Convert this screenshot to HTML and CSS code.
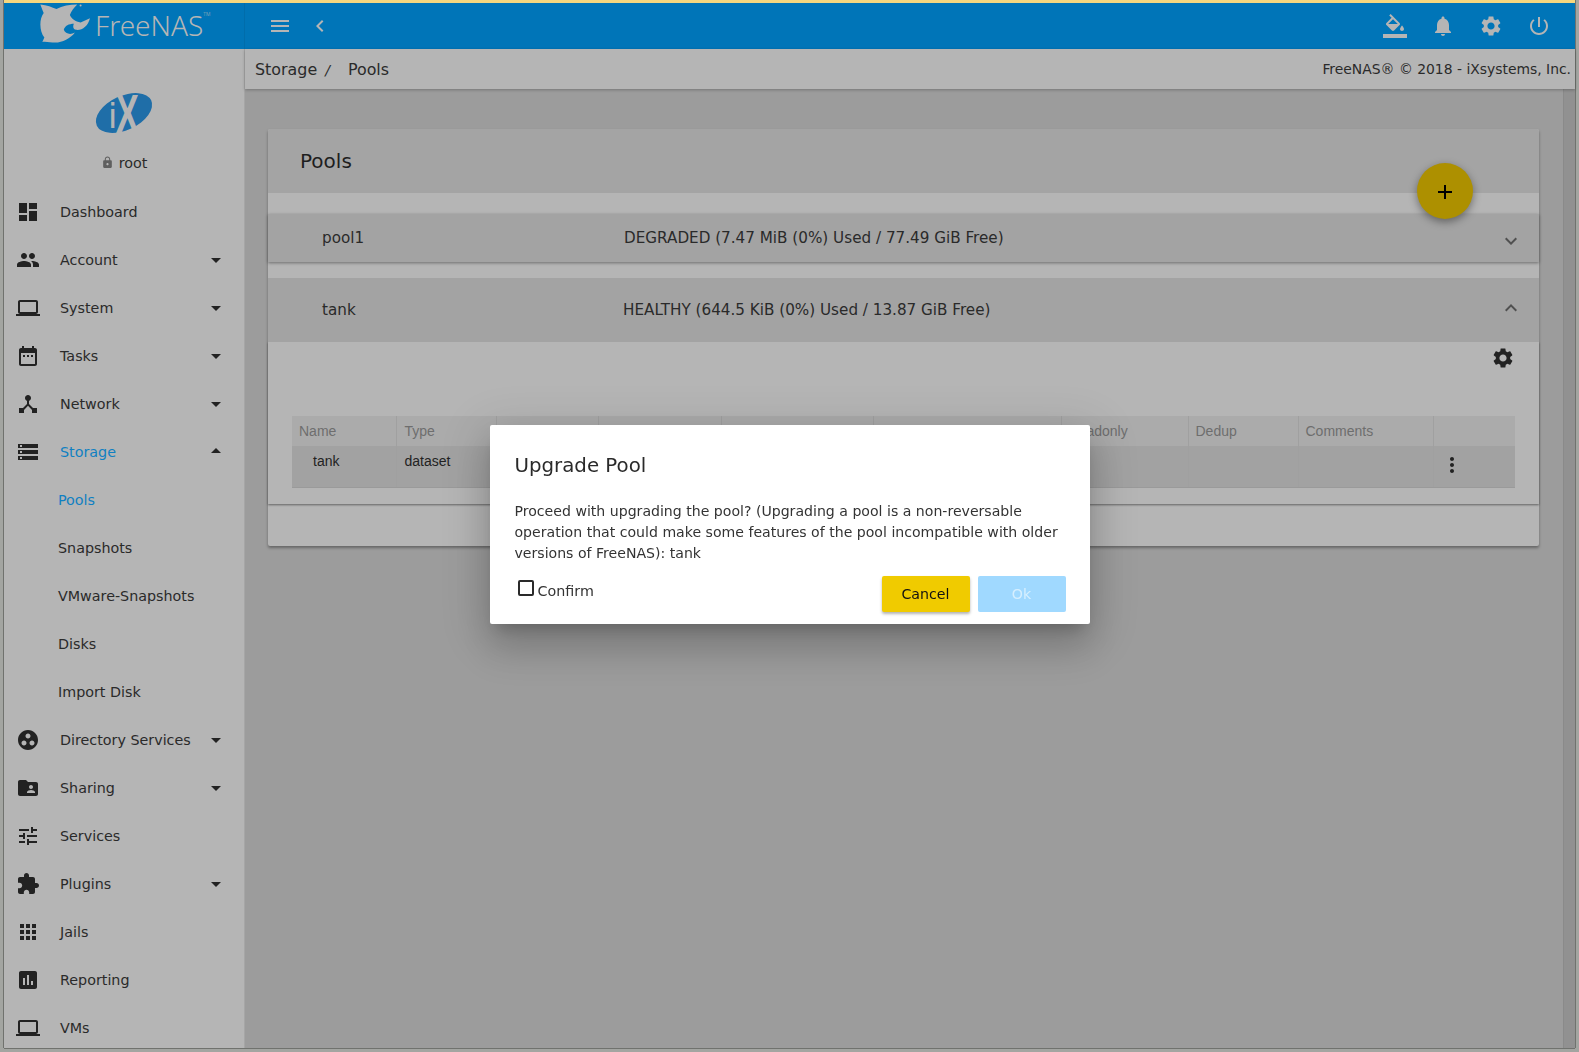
FILE: index.html
```html
<!DOCTYPE html>
<html lang="en">
<head>
    <meta charset="UTF-8">
    <title>FreeNAS - Pools</title>
    <link rel="stylesheet" href="styles.css">
</head>
<body>
    <div class="window">
        <header class="topbar">
            <div class="brand">
                <svg class="shark" viewBox="26 10 158 122">
                    <path fill="#b5b5b5" d="M30 14C50 16 65 22 78 28C95 18 118 14 140 14C130 24 122 34 118 46C122 56 135 66 150 68L178 55C172 78 155 92 137 90C128 88 126 80 130 72C115 72 103 78 100 90C104 102 120 106 133 98C120 116 95 128 75 128C60 128 48 124 36 126L42 113C28 95 25 60 40 40C36 30 33 22 30 14Z"/>
                    <circle cx="150" cy="17" r="3" fill="#b5b5b5"/>
                </svg>
                <span class="brand-name">FreeNAS<sup class="tm">TM</sup></span>
            </div>
            <div class="bar-tools">
                <svg class="bar-icon" viewBox="0 0 24 24"><path d="M3 18h18v-2H3v2zm0-5h18v-2H3v2zm0-7v2h18V6H3z"/></svg>
                <svg class="bar-icon" viewBox="0 0 24 24"><path d="M15.41 7.41L14 6l-6 6 6 6 1.41-1.41L10.83 12z"/></svg>
            </div>
            <div class="bar-actions">
                <svg class="bar-icon" viewBox="0 0 24 24"><path d="M16.56 8.94L7.62 0 6.21 1.41l2.38 2.38-5.15 5.15c-.59.59-.59 1.54 0 2.12l5.5 5.5c.29.29.68.44 1.06.44s.77-.15 1.06-.44l5.5-5.5c.59-.58.59-1.53 0-2.12zM5.21 10L10 5.21 14.79 10H5.21zM19 11.5s-2 2.17-2 3.5c0 1.1.9 2 2 2s2-.9 2-2c0-1.33-2-3.5-2-3.5zM0 20h24v4H0z"/></svg>
                <svg class="bar-icon" viewBox="0 0 24 24"><path d="M12 22c1.1 0 2-.9 2-2h-4c0 1.1.89 2 2 2zm6-6v-5c0-3.07-1.64-5.64-4.5-6.32V4c0-.83-.67-1.5-1.5-1.5s-1.5.67-1.5 1.5v.68C7.63 5.36 6 7.92 6 11v5l-2 2v1h16v-1l-2-2z"/></svg>
                <svg class="bar-icon" viewBox="0 0 24 24"><path d="M19.14 12.94c.04-.3.06-.61.06-.94 0-.32-.02-.64-.07-.94l2.03-1.58c.18-.14.23-.41.12-.61l-1.92-3.32c-.12-.22-.37-.29-.59-.22l-2.39.96c-.5-.38-1.03-.7-1.62-.94l-.36-2.54c-.04-.24-.24-.41-.48-.41h-3.84c-.24 0-.43.17-.47.41l-.36 2.54c-.59.24-1.13.57-1.62.94l-2.39-.96c-.22-.08-.47 0-.59.22L2.74 8.87c-.12.21-.08.47.12.61l2.03 1.58c-.05.3-.09.63-.09.94s.02.64.07.94l-2.03 1.58c-.18.14-.23.41-.12.61l1.92 3.32c.12.22.37.29.59.22l2.39-.96c.5.38 1.03.7 1.62.94l.36 2.54c.05.24.24.41.48.41h3.84c.24 0 .44-.17.47-.41l.36-2.54c.59-.24 1.13-.56 1.62-.94l2.39.96c.22.08.47 0 .59-.22l1.92-3.32c.12-.22.07-.47-.12-.61l-2.01-1.58zM12 15.6c-1.98 0-3.6-1.62-3.6-3.6s1.62-3.6 3.6-3.6 3.6 1.62 3.6 3.6-1.62 3.6-3.6 3.6z"/></svg>
                <svg class="bar-icon" viewBox="0 0 24 24"><path d="M13 3h-2v10h2V3zm4.83 2.17l-1.42 1.42C17.99 7.86 19 9.81 19 12c0 3.87-3.13 7-7 7s-7-3.13-7-7c0-2.19 1.01-4.14 2.58-5.42L6.17 5.17C4.23 6.82 3 9.26 3 12c0 4.97 4.03 9 9 9s9-4.03 9-9c0-2.74-1.23-5.18-3.17-6.83z"/></svg>
            </div>
        </header>

        <div class="shell">
            <nav class="sidebar">
                <div class="user-box">
                    <svg class="ix-logo" viewBox="0 0 80 55">
                        <ellipse cx="39" cy="28" rx="30" ry="17" transform="rotate(-25 39 28)" fill="#1f6ea8"/>
                        <text class="ix-text" transform="translate(24.4 48) scale(.63 1)"><tspan class="ix-small" dy="-5">i</tspan><tspan dy="5">X</tspan></text>
                    </svg>
                    <div class="user-name">
                        <svg class="lock" viewBox="0 0 24 24"><path d="M18 8h-1V6c0-2.76-2.24-5-5-5S7 3.24 7 6v2H6c-1.1 0-2 .9-2 2v10c0 1.1.9 2 2 2h12c1.1 0 2-.9 2-2V10c0-1.1-.9-2-2-2zm-6 9c-1.1 0-2-.9-2-2s.9-2 2-2 2 .9 2 2-.9 2-2 2zm3.1-9H8.9V6c0-1.71 1.39-3.1 3.1-3.1 1.71 0 3.1 1.39 3.1 3.1v2z"/></svg>
                        root
                    </div>
                </div>
                <a class="nav-item"><svg class="nav-icon" viewBox="0 0 24 24"><path d="M3 13h8V3H3v10zm0 8h8v-6H3v6zm10 0h8V11h-8v10zm0-18v6h8V3h-8z"/></svg>Dashboard</a>
                <a class="nav-item has-caret"><svg class="nav-icon" viewBox="0 0 24 24"><path d="M16 11c1.66 0 2.99-1.34 2.99-3S17.66 5 16 5c-1.66 0-3 1.34-3 3s1.34 3 3 3zm-8 0c1.66 0 2.99-1.34 2.99-3S9.66 5 8 5C6.34 5 5 6.34 5 8s1.34 3 3 3zm0 2c-2.33 0-7 1.17-7 3.5V19h14v-2.5c0-2.33-4.67-3.5-7-3.5zm8 0c-.29 0-.62.02-.97.05 1.16.84 1.97 1.97 1.97 3.45V19h6v-2.5c0-2.33-4.67-3.5-7-3.5z"/></svg>Account</a>
                <a class="nav-item has-caret"><svg class="nav-icon" viewBox="0 0 24 24"><path d="M20 18c1.1 0 1.99-.9 1.99-2L22 6c0-1.1-.9-2-2-2H4c-1.1 0-2 .9-2 2v10c0 1.1.9 2 2 2H0v2h24v-2h-4zM4 6h16v10H4V6z"/></svg>System</a>
                <a class="nav-item has-caret"><svg class="nav-icon" viewBox="0 0 24 24"><path d="M9 11H7v2h2v-2zm4 0h-2v2h2v-2zm4 0h-2v2h2v-2zm2-7h-1V2h-2v2H8V2H6v2H5c-1.11 0-1.99.9-1.99 2L3 20c0 1.1.89 2 2 2h14c1.1 0 2-.9 2-2V6c0-1.1-.9-2-2-2zm0 16H5V9h14v11z"/></svg>Tasks</a>
                <a class="nav-item has-caret"><svg class="nav-icon" viewBox="0 0 24 24"><path d="M17 16l-4-4V8.82C14.16 8.4 15 7.3 15 6c0-1.66-1.34-3-3-3S9 4.34 9 6c0 1.3.84 2.4 2 2.82V12l-4 4H3v5h5v-3.05l4-4.2 4 4.2V21h5v-5h-4z"/></svg>Network</a>
                <a class="nav-item has-caret open active"><svg class="nav-icon" viewBox="0 0 24 24"><path d="M2 20h20v-4H2v4zm2-3h2v2H4v-2zM2 4v4h20V4H2zm4 3H4V5h2v2zm-4 7h20v-4H2v4zm2-3h2v2H4v-2z"/></svg>Storage</a>
                <a class="nav-sub active">Pools</a>
                <a class="nav-sub">Snapshots</a>
                <a class="nav-sub">VMware-Snapshots</a>
                <a class="nav-sub">Disks</a>
                <a class="nav-sub">Import Disk</a>
                <a class="nav-item has-caret"><svg class="nav-icon" viewBox="0 0 24 24"><path d="M12 2C6.48 2 2 6.48 2 12s4.48 10 10 10 10-4.48 10-10S17.52 2 12 2zM8 17.5c-1.38 0-2.5-1.12-2.5-2.5s1.12-2.5 2.5-2.5 2.5 1.12 2.5 2.5-1.12 2.5-2.5 2.5zM9.5 8c0-1.38 1.12-2.5 2.5-2.5s2.5 1.12 2.5 2.5-1.12 2.5-2.5 2.5S9.5 9.38 9.5 8zm6.5 9.5c-1.38 0-2.5-1.12-2.5-2.5s1.12-2.5 2.5-2.5 2.5 1.12 2.5 2.5-1.12 2.5-2.5 2.5z"/></svg>Directory Services</a>
                <a class="nav-item has-caret"><svg class="nav-icon" viewBox="0 0 24 24"><path d="M20 6h-8l-2-2H4c-1.1 0-1.99.9-1.99 2L2 18c0 1.1.9 2 2 2h16c1.1 0 2-.9 2-2V8c0-1.1-.9-2-2-2zm-5 3c1.1 0 2 .9 2 2s-.9 2-2 2-2-.9-2-2 .9-2 2-2zm4 8h-8v-1c0-1.33 2.67-2 4-2s4 .67 4 2v1z"/></svg>Sharing</a>
                <a class="nav-item"><svg class="nav-icon" viewBox="0 0 24 24"><path d="M3 17v2h6v-2H3zM3 5v2h10V5H3zm10 16v-2h8v-2h-8v-2h-2v6h2zM7 9v2H3v2h4v2h2V9H7zm14 4v-2H11v2h10zm-6-4h2V7h4V5h-4V3h-2v6z"/></svg>Services</a>
                <a class="nav-item has-caret"><svg class="nav-icon" viewBox="0 0 24 24"><path d="M20.5 11H19V7c0-1.1-.9-2-2-2h-4V3.5C13 2.12 11.88 1 10.5 1S8 2.12 8 3.5V5H4c-1.1 0-1.99.9-1.99 2v3.8H3.5c1.49 0 2.7 1.21 2.7 2.7s-1.21 2.7-2.7 2.7H2V20c0 1.1.9 2 2 2h3.8v-1.5c0-1.49 1.21-2.7 2.7-2.7 1.49 0 2.7 1.21 2.7 2.7V22H17c1.1 0 2-.9 2-2v-4h1.5c1.38 0 2.5-1.12 2.5-2.5S21.88 11 20.5 11z"/></svg>Plugins</a>
                <a class="nav-item"><svg class="nav-icon" viewBox="0 0 24 24"><path d="M4 8h4V4H4v4zm6 12h4v-4h-4v4zm-6 0h4v-4H4v4zm0-6h4v-4H4v4zm6 0h4v-4h-4v4zm6-10v4h4V4h-4zm-6 4h4V4h-4v4zm6 6h4v-4h-4v4zm0 6h4v-4h-4v4z"/></svg>Jails</a>
                <a class="nav-item"><svg class="nav-icon" viewBox="0 0 24 24"><path d="M19 3H5c-1.1 0-2 .9-2 2v14c0 1.1.9 2 2 2h14c1.1 0 2-.9 2-2V5c0-1.1-.9-2-2-2zM9 17H7v-7h2v7zm4 0h-2V7h2v10zm4 0h-2v-4h2v4z"/></svg>Reporting</a>
                <a class="nav-item"><svg class="nav-icon" viewBox="0 0 24 24"><path d="M20 18c1.1 0 1.99-.9 1.99-2L22 6c0-1.1-.9-2-2-2H4c-1.1 0-2 .9-2 2v10c0 1.1.9 2 2 2H0v2h24v-2h-4zM4 6h16v10H4V6z"/></svg>VMs</a>
            </nav>

            <div class="main">
                <div class="crumbs">
                    <div class="crumb-path"><span>Storage</span><i class="crumb-sep">/</i><span>Pools</span></div>
                    <div class="copyright">FreeNAS® © 2018 - iXsystems, Inc.</div>
                </div>
                <div class="main-body">
                    <div class="content">
                        <section class="card">
                            <h2 class="card-title">Pools</h2>
                            <button class="fab"><svg viewBox="0 0 24 24"><path d="M19 13h-6v6h-2v-6H5v-2h6V5h2v6h6v2z"/></svg></button>

                            <div class="pool-row pool-closed">
                                <span class="pool-name">pool1</span>
                                <span class="pool-status">DEGRADED (7.47 MiB (0%) Used / 77.49 GiB Free)</span>
                                <svg class="chevron" viewBox="0 0 24 24"><path d="M16.59 8.59L12 13.17 7.41 8.59 6 10l6 6 6-6z"/></svg>
                            </div>

                            <div class="pool-row pool-open">
                                <span class="pool-name">tank</span>
                                <span class="pool-status">HEALTHY (644.5 KiB (0%) Used / 13.87 GiB Free)</span>
                                <svg class="chevron" viewBox="0 0 24 24"><path d="M12 8l-6 6 1.41 1.41L12 10.83l4.59 4.58L18 14z"/></svg>
                            </div>

                            <div class="pool-panel">
                                <div class="panel-tools">
                                    <svg class="panel-gear" viewBox="0 0 24 24"><path d="M19.14 12.94c.04-.3.06-.61.06-.94 0-.32-.02-.64-.07-.94l2.03-1.58c.18-.14.23-.41.12-.61l-1.92-3.32c-.12-.22-.37-.29-.59-.22l-2.39.96c-.5-.38-1.03-.7-1.62-.94l-.36-2.54c-.04-.24-.24-.41-.48-.41h-3.84c-.24 0-.43.17-.47.41l-.36 2.54c-.59.24-1.13.57-1.62.94l-2.39-.96c-.22-.08-.47 0-.59.22L2.74 8.87c-.12.21-.08.47.12.61l2.03 1.58c-.05.3-.09.63-.09.94s.02.64.07.94l-2.03 1.58c-.18.14-.23.41-.12.61l1.92 3.32c.12.22.37.29.59.22l2.39-.96c.5.38 1.03.7 1.62.94l.36 2.54c.05.24.24.41.48.41h3.84c.24 0 .44-.17.47-.41l.36-2.54c.59-.24 1.13-.56 1.62-.94l2.39.96c.22.08.47 0 .59-.22l1.92-3.32c.12-.22.07-.47-.12-.61l-2.01-1.58zM12 15.6c-1.98 0-3.6-1.62-3.6-3.6s1.62-3.6 3.6-3.6 3.6 1.62 3.6 3.6-1.62 3.6-3.6 3.6z"/></svg>
                                </div>
                                <table class="dataset-table">
                                    <colgroup>
                                        <col class="col-name"><col class="col-type"><col class="col-used"><col class="col-avail"><col class="col-comp"><col class="col-ratio"><col class="col-read"><col class="col-dedup"><col class="col-comm"><col>
                                    </colgroup>
                                    <thead>
                                        <tr>
                                            <th>Name</th><th class="th-type">Type</th><th>Used</th><th>Available</th><th>Compression</th><th>Compression Ratio</th><th>Readonly</th><th>Dedup</th><th>Comments</th><th></th>
                                        </tr>
                                    </thead>
                                    <tbody>
                                        <tr>
                                            <td class="cell-indent">tank</td><td>dataset</td><td></td><td></td><td></td><td></td><td></td><td></td><td></td>
                                            <td><svg class="more" viewBox="0 0 24 24"><path d="M12 8c1.1 0 2-.9 2-2s-.9-2-2-2-2 .9-2 2 .9 2 2 2zm0 2c-1.1 0-2 .9-2 2s.9 2 2 2 2-.9 2-2-.9-2-2-2zm0 6c-1.1 0-2 .9-2 2s.9 2 2 2 2-.9 2-2-.9-2-2-2z"/></svg></td>
                                        </tr>
                                    </tbody>
                                </table>
                            </div>
                            <div class="card-foot"></div>
                        </section>
                    </div>
                    <div class="scrollbar"></div>
                </div>
            </div>
        </div>

        <div class="overlay">
            <div class="dialog">
                <h3 class="dialog-title">Upgrade Pool</h3>
                <p class="dialog-text">Proceed with upgrading the pool? (Upgrading a pool is a non-reversable operation that could make some features of the pool incompatible with older versions of FreeNAS): tank</p>
                <div class="dialog-foot">
                    <label class="confirm"><span class="check"></span>Confirm</label>
                    <div class="dialog-buttons">
                        <button class="btn btn-cancel">Cancel</button>
                        <button class="btn btn-ok">Ok</button>
                    </div>
                </div>
            </div>
        </div>
    </div>
</body>
</html>
```

FILE: styles.css
```css
* {
    box-sizing: border-box;
}
html, body {
    margin: 0;
    height: 100%;
    overflow: hidden;
}
body {
    font-family: "DejaVu Sans", sans-serif;
    font-size: 14.3px;
    color: #2a2a2a;
    background-color: #a3a5a1;
}
.window {
    height: 100vh;
    padding: 0 3px 3px 3px;
    display: flex;
    flex-direction: column;
}

/* top bar */
.topbar {
    height: 49px;
    flex: none;
    display: flex;
    align-items: center;
    margin: 0 1px;
    border-top: 3px solid #f5d77f;
    background-color: #0075b8;
    box-shadow: -1px 0 #70726e, 1px 0 #70726e;
}
.brand {
    width: 241px;
    height: 100%;
    display: flex;
    align-items: flex-start;
    padding-left: 35px;
    border-right: 1px solid #006dab;
}
.shark {
    width: 53px;
    height: 41px;
    flex: none;
}
.brand-name {
    font-family: "Noto Sans", sans-serif;
    font-size: 28px;
    font-weight: 300;
    line-height: 44px;
    color: #b5b5b5;
    margin-left: 3px;
}
.tm {
    font-size: 5px;
    vertical-align: 20px;
    line-height: 0;
}
.bar-tools {
    display: flex;
    align-items: center;
    gap: 16px;
    padding-left: 23px;
}
.bar-actions {
    margin-left: auto;
    display: flex;
    gap: 24px;
    padding-right: 24px;
}
.bar-icon {
    width: 24px;
    height: 24px;
    fill: #b5b5b5;
}

.shell {
    flex: 1;
    display: flex;
    min-height: 0;
    margin: 0 1px 1px 1px;
    box-shadow: -1px 0 #70726e, 1px 0 #70726e, 0 1px #70726e;
}

/* side nav */
.sidebar {
    width: 241px;
    flex: none;
    background-color: #b5b5b5;
    border-right: 1px solid #a6a6a6;
    overflow: hidden;
}
.user-box {
    height: 139px;
    display: flex;
    flex-direction: column;
    align-items: center;
    padding-top: 36px;
}
.ix-logo {
    width: 80px;
    height: 55px;
    flex: none;
    margin-left: 1px;
    overflow: visible;
}
.ix-text {
    font-family: "Liberation Sans", sans-serif;
    font-size: 55px;
    font-weight: 700;
    fill: #b5b5b5;
}
.ix-small {
    font-size: 36px;
}
.user-name {
    display: flex;
    align-items: center;
    gap: 5px;
    margin-top: 11px;
    height: 24px;
}
.lock {
    width: 13px;
    height: 13px;
    fill: #5f5f5f;
    margin-top: -2px;
}
.nav-item, .nav-sub {
    height: 48px;
    display: flex;
    align-items: center;
    position: relative;
    color: #2a2a2a;
}
.nav-item {
    padding-left: 12px;
}
.nav-sub {
    padding-left: 54px;
}
.nav-icon {
    width: 24px;
    height: 24px;
    fill: #222;
    margin-right: 20px;
    flex: none;
}
.has-caret::after {
    content: "";
    position: absolute;
    right: 23px;
    top: 22px;
    border-left: 5px solid transparent;
    border-right: 5px solid transparent;
    border-top: 5px solid #222;
}
.has-caret.open::after {
    top: 20px;
    border-top: none;
    border-bottom: 5px solid #222;
}
.nav-item.active, .nav-sub.active {
    color: #0f80c2;
}

/* main area */
.main {
    flex: 1;
    min-width: 0;
    display: flex;
    flex-direction: column;
    background-color: #9c9c9c;
}
.crumbs {
    height: 40px;
    flex: none;
    display: flex;
    align-items: center;
    justify-content: space-between;
    padding: 1px 4px 0 10px;
    background-color: #b5b5b5;
    box-shadow: 0 1px 3px rgba(0,0,0,0.25);
    position: relative;
}
.crumb-path {
    font-size: 15.9px;
    display: flex;
    align-items: center;
}
.crumb-sep {
    font-size: 14px;
    margin: 0 18px 0 8px;
}
.copyright {
    font-size: 13.9px;
    margin-bottom: 2px;
}
.main-body {
    flex: 1;
    display: flex;
    min-height: 0;
}
.content {
    flex: 1;
    padding: 40px 24px 0 23px;
}
.scrollbar {
    width: 12px;
    background-color: #919191;
    border-left: 1px solid #8a8a8a;
}

/* pools card */
.card {
    position: relative;
    height: 417px;
    background-color: #b5b5b5;
    border-radius: 2px;
    box-shadow: 0 2px 3px rgba(0,0,0,0.35);
}
.card-title {
    height: 64px;
    margin: 0 0 21px 0;
    padding-left: 32px;
    font-size: 20px;
    font-weight: 400;
    line-height: 64px;
    background-color: #a4a4a4;
    border-radius: 2px 2px 0 0;
    color: #1e1e1e;
}
.fab {
    position: absolute;
    z-index: 2;
    left: 1149px;
    top: 34px;
    width: 56px;
    height: 56px;
    padding: 17px 16px 15px 16px;
    border: none;
    border-radius: 50%;
    background-color: #ad9000;
    box-shadow: 0 3px 8px rgba(0,0,0,0.4);
}
.fab svg {
    display: block;
    width: 24px;
    height: 24px;
    fill: #000;
}
.pool-row {
    display: flex;
    align-items: center;
    position: relative;
    background-color: #a3a3a3;
    font-size: 15.2px;
    padding-left: 54px;
}
.pool-closed {
    height: 48px;
    margin-bottom: 16px;
    box-shadow: 0 1px 3px rgba(0,0,0,0.4);
}
.pool-open {
    height: 64px;
}
.pool-name {
    width: 302px;
}
.pool-open .pool-name {
    width: 301px;
}
.chevron {
    position: absolute;
    right: 16px;
    width: 24px;
    height: 24px;
    fill: #505050;
}
.pool-closed .chevron {
    top: 15px;
}
.pool-open .chevron {
    top: 18px;
}
.pool-panel {
    height: 162px;
    padding: 0 24px;
    box-shadow: 0 1px 2px rgba(0,0,0,0.45);
}
.panel-tools {
    height: 74px;
    display: flex;
    justify-content: flex-end;
    padding: 4px 0 0 0;
}
.panel-gear {
    width: 24px;
    height: 24px;
    fill: #222;
}
.dataset-table {
    width: 100%;
    table-layout: fixed;
    border-collapse: collapse;
    font-family: "Liberation Sans", sans-serif;
    font-size: 14px;
}
.col-name { width: 104px; }
.col-type { width: 100px; }
.col-used { width: 102px; }
.col-avail { width: 123px; }
.col-comp { width: 152px; }
.col-ratio { width: 188px; }
.col-read { width: 127px; }
.col-dedup { width: 110px; }
.col-comm { width: 135px; }
.dataset-table th, .dataset-table td {
    text-align: left;
    border-right: 1px solid #a0a0a0;
    padding: 0 7px;
    white-space: nowrap;
}
.dataset-table .th-type {
    padding-left: 8px;
}
.dataset-table th:last-child, .dataset-table td:last-child {
    border-right: none;
}
.dataset-table th {
    height: 30px;
    font-weight: 400;
    color: #6e6e6e;
    background-color: #ababab;
}
.dataset-table td {
    height: 41px;
    color: #222;
    background-color: #a2a2a2;
    vertical-align: top;
    padding: 7px 8px 0 8px;
    border-bottom: 1px solid #9a9a9a;
}
.dataset-table .cell-indent {
    padding-left: 21px;
}
.dataset-table td:last-child {
    padding-left: 6px;
    padding-top: 6px;
}
.more {
    display: block;
    width: 24px;
    height: 24px;
    fill: #222;
    margin-top: 1px;
}

/* dialog */
.overlay {
    position: fixed;
    z-index: 5;
    top: 0;
    left: 0;
    width: 100vw;
    height: 100vh;
    display: flex;
    align-items: center;
    justify-content: center;
    padding-bottom: 3px;
}
.dialog {
    width: 600px;
    height: 199px;
    padding: 24px 24px 24px 25px;
    background-color: #fff;
    border-radius: 2px;
    box-shadow: 0 11px 15px -7px rgba(0,0,0,0.2), 0 24px 38px 3px rgba(0,0,0,0.14), 0 9px 46px 8px rgba(0,0,0,0.12);
}
.dialog-title {
    margin: 0 0 18px 0;
    font-size: 19.8px;
    font-weight: 400;
    line-height: 34px;
    color: #2a2a2a;
}
.dialog-text {
    margin: 0;
    font-size: 14.1px;
    line-height: 21px;
    color: #333;
}
.dialog-foot {
    display: flex;
    justify-content: space-between;
    align-items: flex-start;
    margin-top: 12px;
}
.confirm {
    display: flex;
    align-items: center;
    color: #333;
    padding: 7px 0 0 3px;
}
.check {
    width: 16px;
    height: 16px;
    margin: -7px 4px 0 0;
    border: 2px solid #2a2a2a;
    border-radius: 2px;
}
.dialog-buttons {
    display: flex;
    gap: 8px;
}
.btn {
    width: 88px;
    height: 36px;
    border: none;
    border-radius: 2px;
    font-family: inherit;
    font-size: 14.2px;
}
.btn-cancel {
    background-color: #f0cb00;
    color: #111;
    box-shadow: 0 2px 3px rgba(0,0,0,0.3);
}
.btn-ok {
    background-color: #a0d9ff;
    color: #d6efff;
}
```
